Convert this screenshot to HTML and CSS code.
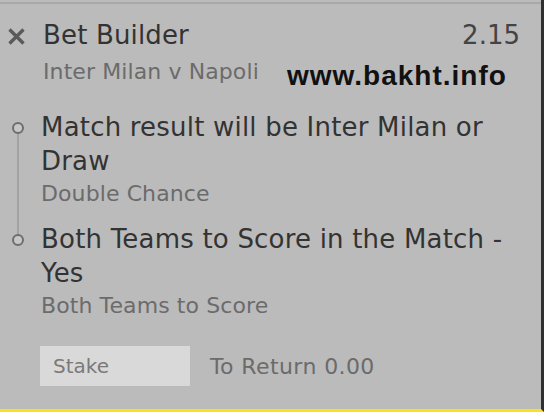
FILE: index.html
```html
<!DOCTYPE html>
<html lang="en">
<head>
    <meta charset="UTF-8">
    <title>Bet Builder</title>
    <link rel="stylesheet" href="styles.css">
</head>
<body>
    <div class="slip">
        <div class="head">
            <span class="close">
                <svg width="19" height="19" viewBox="0 0 19 19"><path d="M2.5 2.5 L16.5 16.5 M16.5 2.5 L2.5 16.5" stroke="#5a5a5a" stroke-width="3.4" fill="none"/></svg>
            </span>
            <span class="title">Bet Builder</span>
            <span class="price">2.15</span>
        </div>
        <div class="event">Inter Milan v Napoli</div>
        <div class="watermark">www.bakht.info</div>

        <div class="legs">
            <div class="leg">
                <div class="leg-name">Match result will be Inter Milan or Draw</div>
                <div class="leg-market">Double Chance</div>
            </div>
            <div class="leg">
                <div class="leg-name">Both Teams to Score in the Match - Yes</div>
                <div class="leg-market">Both Teams to Score</div>
            </div>
        </div>

        <div class="stake-row">
            <div class="stake">Stake</div>
            <div class="return">To Return 0.00</div>
        </div>
    </div>
</body>
</html>
```

FILE: styles.css
```css
body{
    margin: 0;
    font-family: "DejaVu Sans", Verdana, sans-serif;
    background-color: #bbbbbb;
}
.slip{
    position: relative;
    height: 412px;
    box-sizing: border-box;
    padding-right: 21px;
    border-right: 3px solid #2f2f2f;
    border-bottom: 3px solid #ffde1a;
    background: linear-gradient(#bbbbbb 2px, #a8a8a8 2px, #a8a8a8 4px, #bbbbbb 4px);
}
.head{
    display: flex;
    align-items: flex-start;
    padding-top: 18px;
}
.close{
    display: flex;
    width: 36px;
    padding-left: 7px;
    padding-top: 9px;
}
.title{
    font-size: 26px;
    line-height: 34px;
    letter-spacing: 0.15px;
    color: #333;
}
.price{
    margin-left: auto;
    font-size: 26px;
    line-height: 34px;
    color: #444;
}
.event{
    margin-left: 43px;
    margin-top: 6px;
    font-size: 22px;
    line-height: 28px;
    letter-spacing: 0.1px;
    color: #6b6b6b;
}
.watermark{
    position: absolute;
    top: 62px;
    left: 287px;
    font-family: "Liberation Sans", Arial, sans-serif;
    font-weight: bold;
    font-size: 28px;
    line-height: 28px;
    letter-spacing: 1px;
    color: #111;
}
.legs{
    margin-top: 24px;
}
.leg{
    position: relative;
    padding-left: 41px;
    padding-bottom: 14px;
}
.leg:last-child{
    padding-bottom: 0;
}
.leg::before{
    content: "";
    position: absolute;
    left: 12px;
    top: 12px;
    width: 12px;
    height: 12px;
    box-sizing: border-box;
    border: 2px solid #6e6e6e;
    border-radius: 50%;
    background-color: #c6c6c6;
    z-index: 1;
}
.leg::after{
    content: "";
    position: absolute;
    left: 17px;
    top: 18px;
    bottom: -18px;
    width: 2px;
    background-color: #a2a2a2;
}
.leg:last-child::after{
    display: none;
}
.leg-name{
    font-size: 26px;
    line-height: 34px;
    letter-spacing: 0.2px;
    color: #333;
}
.leg-market{
    margin-top: 2px;
    font-size: 22px;
    line-height: 28px;
    letter-spacing: 0.1px;
    color: #6b6b6b;
}
.stake-row{
    display: flex;
    align-items: center;
    margin-top: 26px;
    padding-left: 40px;
}
.stake{
    width: 150px;
    height: 40px;
    box-sizing: border-box;
    padding-left: 13px;
    display: flex;
    align-items: center;
    background-color: #d9d9d9;
    font-size: 20px;
    color: #7a7a7a;
}
.return{
    margin-left: 20px;
    font-size: 22px;
    letter-spacing: 0.4px;
    color: #6b6b6b;
}
```
